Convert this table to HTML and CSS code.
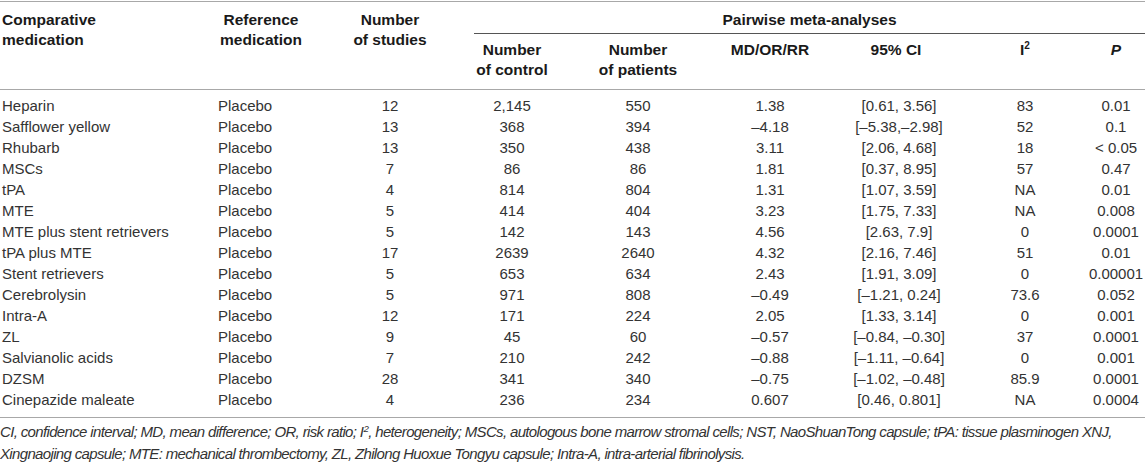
FILE: index.html
```html
<!DOCTYPE html>
<html lang="en">
<head>
<meta charset="utf-8">
<title>Pairwise meta-analyses</title>
<link rel="stylesheet" href="styles.css">
</head>
<body>
<div class="page">
<table class="meta">
  <colgroup>
    <col class="w1"><col class="w2"><col class="w3"><col class="w4"><col class="w5"><col class="w6"><col class="w7"><col class="w8"><col class="w9">
  </colgroup>
  <thead>
    <tr class="hr1">
      <th rowspan="2" class="c1">Comparative<br>medication</th>
      <th rowspan="2" class="c2h">Reference<br>medication</th>
      <th rowspan="2" class="c3">Number<br>of studies</th>
      <th colspan="6" class="group">Pairwise meta-analyses</th>
    </tr>
    <tr class="hr2">
      <th class="c4">Number<br>of control</th>
      <th class="c5">Number<br>of patients</th>
      <th class="c6">MD/OR/RR</th>
      <th class="c7">95% CI</th>
      <th class="c8">I<sup>2</sup></th>
      <th class="c9"><i>P</i></th>
    </tr>
  </thead>
  <tbody>
    <tr class="first"><td class="c1">Heparin</td><td class="c2">Placebo</td><td class="c3">12</td><td class="c4">2,145</td><td class="c5">550</td><td class="c6">1.38</td><td class="c7">[0.61, 3.56]</td><td class="c8">83</td><td class="c9">0.01</td></tr>
    <tr><td class="c1">Safflower yellow</td><td class="c2">Placebo</td><td class="c3">13</td><td class="c4">368</td><td class="c5">394</td><td class="c6">–4.18</td><td class="c7">[–5.38,–2.98]</td><td class="c8">52</td><td class="c9">0.1</td></tr>
    <tr><td class="c1">Rhubarb</td><td class="c2">Placebo</td><td class="c3">13</td><td class="c4">350</td><td class="c5">438</td><td class="c6">3.11</td><td class="c7">[2.06, 4.68]</td><td class="c8">18</td><td class="c9">&lt; 0.05</td></tr>
    <tr><td class="c1">MSCs</td><td class="c2">Placebo</td><td class="c3">7</td><td class="c4">86</td><td class="c5">86</td><td class="c6">1.81</td><td class="c7">[0.37, 8.95]</td><td class="c8">57</td><td class="c9">0.47</td></tr>
    <tr><td class="c1">tPA</td><td class="c2">Placebo</td><td class="c3">4</td><td class="c4">814</td><td class="c5">804</td><td class="c6">1.31</td><td class="c7">[1.07, 3.59]</td><td class="c8">NA</td><td class="c9">0.01</td></tr>
    <tr><td class="c1">MTE</td><td class="c2">Placebo</td><td class="c3">5</td><td class="c4">414</td><td class="c5">404</td><td class="c6">3.23</td><td class="c7">[1.75, 7.33]</td><td class="c8">NA</td><td class="c9">0.008</td></tr>
    <tr><td class="c1">MTE plus stent retrievers</td><td class="c2">Placebo</td><td class="c3">5</td><td class="c4">142</td><td class="c5">143</td><td class="c6">4.56</td><td class="c7">[2.63, 7.9]</td><td class="c8">0</td><td class="c9">0.0001</td></tr>
    <tr><td class="c1">tPA plus MTE</td><td class="c2">Placebo</td><td class="c3">17</td><td class="c4">2639</td><td class="c5">2640</td><td class="c6">4.32</td><td class="c7">[2.16, 7.46]</td><td class="c8">51</td><td class="c9">0.01</td></tr>
    <tr><td class="c1">Stent retrievers</td><td class="c2">Placebo</td><td class="c3">5</td><td class="c4">653</td><td class="c5">634</td><td class="c6">2.43</td><td class="c7">[1.91, 3.09]</td><td class="c8">0</td><td class="c9">0.00001</td></tr>
    <tr><td class="c1">Cerebrolysin</td><td class="c2">Placebo</td><td class="c3">5</td><td class="c4">971</td><td class="c5">808</td><td class="c6">–0.49</td><td class="c7">[–1.21, 0.24]</td><td class="c8">73.6</td><td class="c9">0.052</td></tr>
    <tr><td class="c1">Intra-A</td><td class="c2">Placebo</td><td class="c3">12</td><td class="c4">171</td><td class="c5">224</td><td class="c6">2.05</td><td class="c7">[1.33, 3.14]</td><td class="c8">0</td><td class="c9">0.001</td></tr>
    <tr><td class="c1">ZL</td><td class="c2">Placebo</td><td class="c3">9</td><td class="c4">45</td><td class="c5">60</td><td class="c6">–0.57</td><td class="c7">[–0.84, –0.30]</td><td class="c8">37</td><td class="c9">0.0001</td></tr>
    <tr><td class="c1">Salvianolic acids</td><td class="c2">Placebo</td><td class="c3">7</td><td class="c4">210</td><td class="c5">242</td><td class="c6">–0.88</td><td class="c7">[–1.11, –0.64]</td><td class="c8">0</td><td class="c9">0.001</td></tr>
    <tr><td class="c1">DZSM</td><td class="c2">Placebo</td><td class="c3">28</td><td class="c4">341</td><td class="c5">340</td><td class="c6">–0.75</td><td class="c7">[–1.02, –0.48]</td><td class="c8">85.9</td><td class="c9">0.0001</td></tr>
    <tr class="last"><td class="c1">Cinepazide maleate</td><td class="c2">Placebo</td><td class="c3">4</td><td class="c4">236</td><td class="c5">234</td><td class="c6">0.607</td><td class="c7">[0.46, 0.801]</td><td class="c8">NA</td><td class="c9">0.0004</td></tr>
  </tbody>
</table>
<p class="note">CI, confidence interval; MD, mean difference; OR, risk ratio; I<sup>2</sup>, heterogeneity; MSCs, autologous bone marrow stromal cells; NST, NaoShuanTong capsule; tPA: tissue plasminogen XNJ,<br>Xingnaojing capsule; MTE: mechanical thrombectomy, ZL, Zhilong Huoxue Tongyu capsule; Intra-A, intra-arterial fibrinolysis.</p>
</div>
</body>
</html>
```
FILE: styles.css
```css
html, body {
  margin: 0;
  padding: 0;
  background: #ffffff;
}

.page {
  width: 1145px;
  font-family: "Liberation Sans", Arial, sans-serif;
  color: #333333;
}

sup {
  font-size: 0.65em;
  line-height: 0;
  vertical-align: 0.55em;
}

.meta {
  width: 1145px;
  table-layout: fixed;
  border-collapse: collapse;
  border-top: 1px solid #a8a8a8;
  border-bottom: 1px solid #a8a8a8;
  margin-top: 1px;
  font-size: 15px;
}

.w1 { width: 216px; }
.w2 { width: 90px; }
.w3 { width: 168px; }
.w4 { width: 76px; }
.w5 { width: 176px; }
.w6 { width: 88px; }
.w7 { width: 164px; }
.w8 { width: 109px; }
.w9 { width: 58px; }

.meta th {
  font-size: 15.5px;
  font-weight: bold;
  color: #1a1a1a;
  line-height: 20px;
  white-space: nowrap;
  vertical-align: top;
  padding: 0;
  text-align: center;
}

.meta thead {
  border-bottom: 1px solid #a8a8a8;
}

.hr1 th {
  padding-top: 8px;
}

.hr1 .group {
  padding-bottom: 3px;
  border-bottom: 1px solid #555555;
}

.hr2 th {
  padding-top: 6px;
  padding-bottom: 9px;
}

.meta td {
  line-height: 21px;
  padding: 0;
  white-space: nowrap;
  text-align: center;
}

.meta .first td {
  padding-top: 5px;
}

.meta .last td {
  padding-bottom: 7px;
}

.meta .c1 {
  text-align: left;
  padding-left: 2px;
}

.meta td.c2 {
  text-align: left;
  padding-left: 2px;
}

.meta td.c7 {
  padding-left: 6px;
}

.meta .c8 {
  padding-right: 15px;
}

.note {
  margin: 0;
  padding-top: 3px;
  font-size: 15px;
  font-style: italic;
  line-height: 22px;
  letter-spacing: -0.65px;
  color: #333333;
  white-space: nowrap;
}
```
